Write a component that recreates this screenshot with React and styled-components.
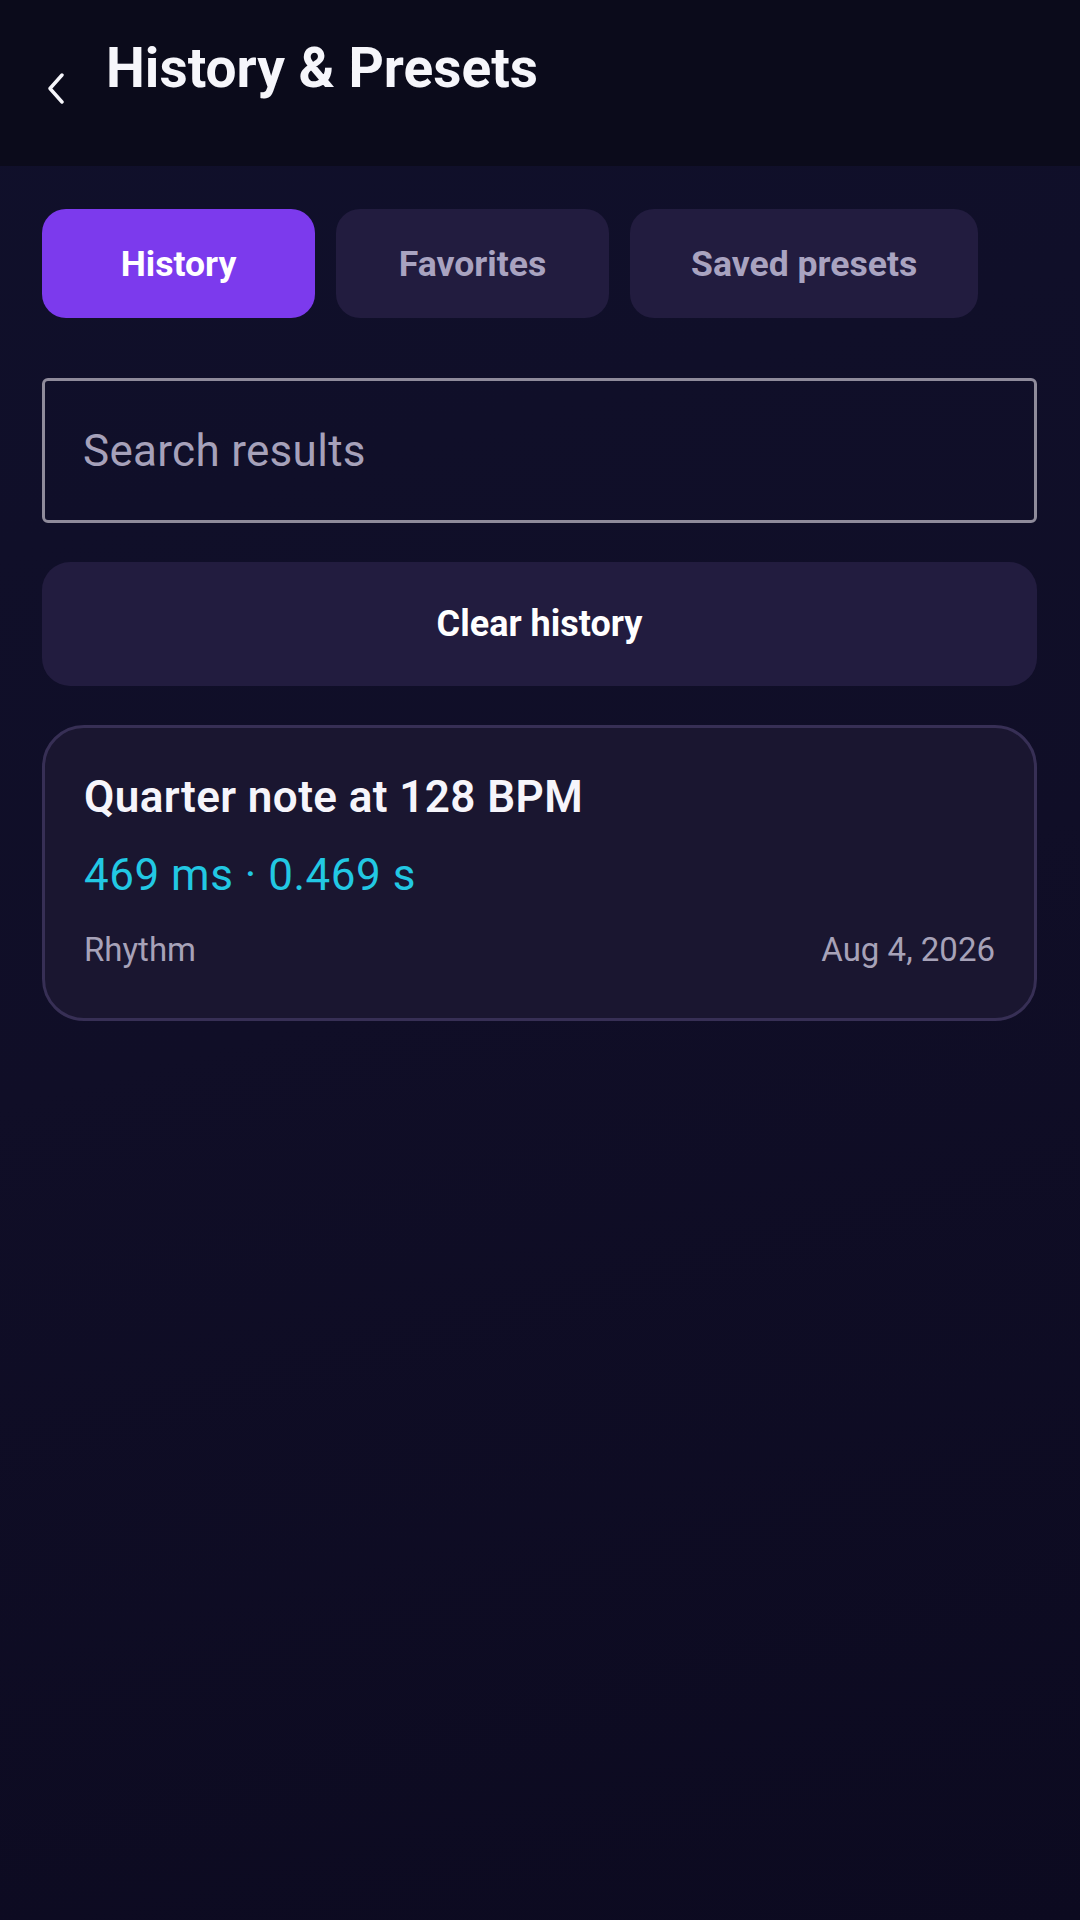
import React, { useState } from "react"
import styled, { createGlobalStyle } from "styled-components"

const GlobalStyle = createGlobalStyle`
  html, body {
    margin: 0;
    padding: 0;
    background: #0d0c21;
  }
  * {
    box-sizing: border-box;
  }
  body {
    font-family: Roboto, "Noto Sans", "Liberation Sans", sans-serif;
  }
`

const Page = styled.div`
  min-height: 1920px;
  width: 1080px;
  display: flex;
  flex-direction: column;
  background: linear-gradient(165deg, #10102b 0%, #100e27 50%, #0c0a20 100%);
`

const Header = styled.header`
  height: 166px;
  display: flex;
  align-items: flex-start;
  padding: 35px 0 0 42px;
  background: #0b0b1b;
`

const BackButton = styled.button`
  width: 64px;
  height: 106px;
  padding: 0 0 0 4px;
  border: none;
  background: transparent;
  display: flex;
  align-items: center;
  justify-content: flex-start;
  cursor: pointer;
`

const Title = styled.h1`
  margin: 0;
  font-size: 55px;
  line-height: 66px;
  font-weight: 700;
  color: #f6f6fb;
`

const Content = styled.main`
  display: flex;
  flex-direction: column;
  padding: 43px 43px 0 42px;
`

const Tabs = styled.div`
  display: flex;
  gap: 21px;
`

const Tab = styled.button`
  min-width: 273px;
  height: 109px;
  padding: 0 61px;
  border: none;
  border-radius: 24px;
  font-family: inherit;
  font-size: 35.6px;
  font-weight: 700;
  background: ${p => (p.active ? "#7c3aed" : "#221c3f")};
  color: ${p => (p.active ? "#ffffff" : "#a9a3c0")};
  cursor: pointer;
`

const Search = styled.input`
  margin-top: 60px;
  height: 145px;
  width: 100%;
  padding: 0 38px;
  border: 3px solid #8f8b9b;
  border-radius: 6px;
  background: transparent;
  font-family: inherit;
  font-size: 44px;
  color: #ffffff;
  outline: none;
  &::placeholder {
    color: #a6a1ba;
    letter-spacing: 0.3px;
  }
`

const ClearButton = styled.button`
  margin-top: 39px;
  height: 124px;
  width: 100%;
  border: none;
  border-radius: 28px;
  background: #221c3f;
  color: #ffffff;
  font-family: inherit;
  font-size: 36px;
  font-weight: 700;
  cursor: pointer;
`

const Card = styled.div`
  margin-top: 39px;
  height: 296px;
  border: 3px solid #372f55;
  border-radius: 42px;
  background: #1a1630;
  padding: 43px 39px 0 39px;
  display: flex;
  flex-direction: column;
`

const CardTitle = styled.div`
  font-size: 44px;
  font-weight: 600;
  letter-spacing: 0.4px;
  color: #f6f5fb;
`

const CardValue = styled.div`
  margin-top: 26px;
  font-size: 44px;
  letter-spacing: 0.5px;
  color: #22c8e3;
`

const CardMeta = styled.div`
  margin-top: 29px;
  display: flex;
  justify-content: space-between;
  font-size: 33px;
  color: #a7a2b8;
`

const tabs = ["History", "Favorites", "Saved presets"]

const ChevronLeft = () => (
  <svg width="20" height="32" viewBox="0 0 20 32">
    <polyline
      points="16,3 4,16.5 16,30"
      fill="none"
      stroke="#f6f6fb"
      strokeWidth="3.4"
      strokeLinecap="round"
      strokeLinejoin="round"
    />
  </svg>
)

export default function App() {
  const [active, setActive] = useState(0)
  return (
    <Page>
      <GlobalStyle />
      <Header>
        <BackButton aria-label="Back">
          <ChevronLeft />
        </BackButton>
        <Title>History &amp; Presets</Title>
      </Header>
      <Content>
        <Tabs>
          {tabs.map((t, i) => (
            <Tab key={t} active={i === active} onClick={() => setActive(i)}>
              {t}
            </Tab>
          ))}
        </Tabs>
        <Search placeholder="Search results" />
        <ClearButton>Clear history</ClearButton>
        <Card>
          <CardTitle>Quarter note at 128 BPM</CardTitle>
          <CardValue>469 ms · 0.469 s</CardValue>
          <CardMeta>
            <span>Rhythm</span>
            <span>Aug 4, 2026</span>
          </CardMeta>
        </Card>
      </Content>
    </Page>
  )
}
